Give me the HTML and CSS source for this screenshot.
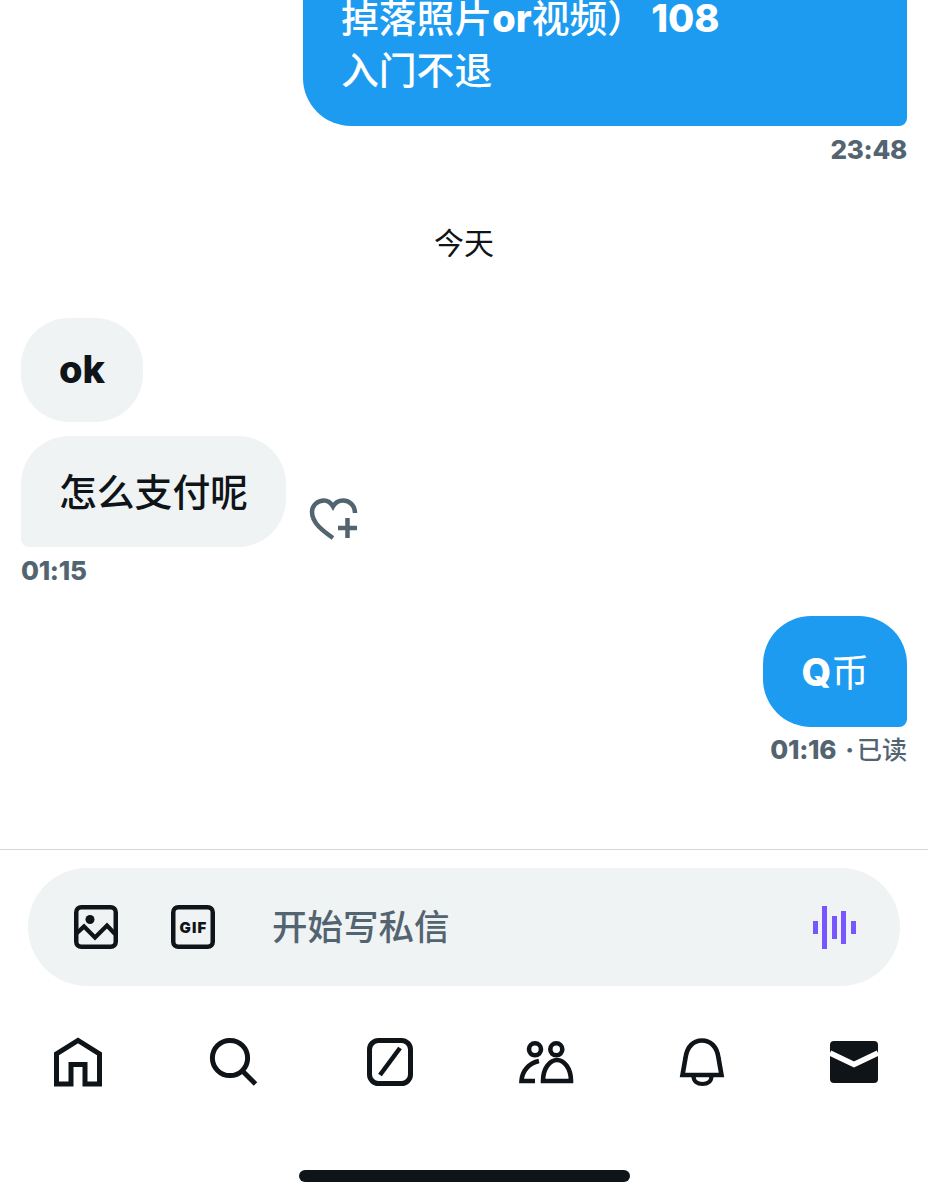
FILE: index.html
```html
<!DOCTYPE html>
<html lang="zh">
<head>
<meta charset="utf-8">
<title>私信</title>
<link rel="stylesheet" href="styles.css">
</head>
<body>
<div class="screen">
  <main class="thread">
    <div class="bubble sent first"><div><span class="cjk">掉落照片</span><b>or</b><span class="cjk">视频）</span> <b class="num">108</b></div><div class="cjk">入门不退</div></div>
    <div class="meta right first-meta">23:48</div>
    <div class="day">今天</div>
    <div class="bubble received solo"><b>ok</b></div>
    <div class="row">
      <div class="bubble received tail-left">怎么支付呢</div>
      <svg class="heart" viewBox="0 0 49 44" width="49" height="44" aria-hidden="true">
        <path d="M24 41 C14 34 3 26 3 15 C3 8 9 3.5 15 3.5 C19 3.5 22 6 24 9.5 C26 6 29 3.5 34 3.5 C41 3.5 46 9 46 16" fill="none" stroke="#536471" stroke-width="4.5"/>
        <path d="M29 31 H48 M38.5 21 V41" fill="none" stroke="#536471" stroke-width="4.5"/>
      </svg>
    </div>
    <div class="meta second-meta">01:15</div>
    <div class="bubble sent tail-right q"><b>Q</b><span class="thin">币</span></div>
    <div class="meta right read-row"><span>01:16</span><span class="read"><span class="dot">·</span>已读</span></div>
  </main>

  <section class="composer">
    <svg class="tool" viewBox="0 0 44 44" width="44" height="44" aria-hidden="true">
      <rect x="2.25" y="2.25" width="39.5" height="39.5" rx="5" fill="none" stroke="#0f1419" stroke-width="4.5"/>
      <circle cx="16" cy="14.5" r="4.5" fill="#0f1419"/>
      <path d="M3 28 L10 21.5 L21 32.5 L33 20.5 L41 29" fill="none" stroke="#0f1419" stroke-width="4.2"/>
    </svg>
    <svg class="tool gif" viewBox="0 0 44 44" width="44" height="44" aria-hidden="true">
      <rect x="2.25" y="2.25" width="39.5" height="39.5" rx="5" fill="none" stroke="#0f1419" stroke-width="4.5"/>
      <text x="22.5" y="27.5" class="gif-text" text-anchor="middle">GIF</text>
    </svg>
    <span class="placeholder">开始写私信</span>
    <svg class="wave" viewBox="0 0 44 44" width="44" height="44" aria-hidden="true">
      <rect x="1" y="16" width="5" height="13" fill="#7856ff"/>
      <rect x="10" y="1" width="5" height="43" fill="#7856ff"/>
      <rect x="20" y="11" width="5" height="23" fill="#7856ff"/>
      <rect x="29" y="6" width="5" height="33" fill="#7856ff"/>
      <rect x="39" y="16" width="5" height="13" fill="#7856ff"/>
    </svg>
  </section>

  <nav class="tabs">
    <svg viewBox="0 0 48 48" width="48" height="48" aria-hidden="true">
      <path d="M2.5 46 V16 L24 2.5 L45.5 16 V46 H31 V26.5 H17 V46 Z" fill="none" stroke="#0f1419" stroke-width="5"/>
    </svg>
    <svg viewBox="0 0 48 48" width="48" height="48" aria-hidden="true">
      <circle cx="21" cy="20" r="17.6" fill="none" stroke="#0f1419" stroke-width="5"/>
      <path d="M33.5 33 L46.5 46" fill="none" stroke="#0f1419" stroke-width="5"/>
    </svg>
    <svg viewBox="0 0 48 48" width="48" height="48" aria-hidden="true">
      <rect x="5.5" y="2.5" width="41" height="43" rx="9" fill="none" stroke="#0f1419" stroke-width="5"/>
      <path d="M36 10 L16 37" fill="none" stroke="#0f1419" stroke-width="4.6"/>
    </svg>
    <svg viewBox="0 0 48 48" width="48" height="48" aria-hidden="true">
      <circle cx="15" cy="11.3" r="6" fill="none" stroke="#0f1419" stroke-width="4.6"/>
      <circle cx="36.3" cy="11.3" r="6" fill="none" stroke="#0f1419" stroke-width="4.6"/>
      <path d="M23 43 C23 30 30 22 37 22 C44 22 51 30 51 43 Z" fill="none" stroke="#0f1419" stroke-width="4.6"/>
      <path d="M15 43 H1.5 C2 33 9 25 19 23" fill="none" stroke="#0f1419" stroke-width="4.6"/>
    </svg>
    <svg viewBox="0 0 48 48" width="48" height="48" aria-hidden="true">
      <path d="M7.5 37 L10.5 20 C12 8 19 2.5 27 2.5 C35 2.5 42 8 43.5 20 L46.5 37 Z" fill="none" stroke="#0f1419" stroke-width="4.6"/>
      <path d="M18.5 38 C18.5 43 22 46 27.5 46 C33 46 36.5 43 36.5 38" fill="none" stroke="#0f1419" stroke-width="4.2"/>
    </svg>
    <svg viewBox="0 0 48 48" width="48" height="48" aria-hidden="true">
      <rect x="0" y="3" width="48" height="42" rx="4" fill="#0f1419"/>
      <path d="M0 15 L24 26.5 L48 15" fill="none" stroke="#fff" stroke-width="5.6"/>
    </svg>
  </nav>

  <div class="home-indicator"></div>
</div>
</body>
</html>
```
FILE: styles.css
```css
* { box-sizing: border-box; }
html, body { margin: 0; padding: 0; background: #fff; }
body {
  font-family: "Inter", "Noto Sans CJK SC", "Noto Sans", sans-serif;
  color: #0f1419;
}
.screen {
  width: 928px;
  height: 1200px;
  overflow: hidden;
  display: flex;
  flex-direction: column;
}
.thread {
  height: 850px;
  flex: none;
  padding: 0 21px;
  border-bottom: 1px solid #cfd9de;
  display: flex;
  flex-direction: column;
  align-items: flex-start;
}
.bubble {
  font-size: 37.8px;
  line-height: 52px;
  font-weight: 500;
  padding: 30px 38px 29px;
  border-radius: 48px;
}
.bubble b { font-weight: 800; font-size: 38px; }
.sent {
  background: #1d9bf0;
  color: #fff;
  align-self: flex-end;
}
.received { background: #eff3f4; }
.first {
  width: 604px;
  margin-top: -8px;
  padding-top: 0;
  padding-bottom: 30px;
  border-radius: 0 0 8px 48px;
}
.first .num { margin-left: -4px; }
.solo {
  padding-top: 25px;
  padding-bottom: 27px;
  margin-bottom: 14px;
}
.tail-left { border-bottom-left-radius: 8px; }
.tail-right { border-bottom-right-radius: 8px; }
.q { margin-top: 28px; }
.thin { font-weight: 400; }
.row {
  display: flex;
  align-items: flex-end;
  gap: 23px;
}
.heart { margin-bottom: 6px; display: block; }
.meta {
  font-size: 26px;
  line-height: 34px;
  font-weight: 800;
  letter-spacing: -0.3px;
  color: #536471;
  margin-top: 6px;
}
.right { align-self: flex-end; }
.first-meta { margin-top: 7px; }
.second-meta { margin-top: 7px; }
.read { font-size: 25px; font-weight: 500; margin-left: 9px; letter-spacing: 0; }
.dot { margin-right: 3px; font-weight: 800; }
.day {
  align-self: center;
  font-size: 30px;
  line-height: 40px;
  font-weight: 400;
  margin-top: 56px;
  margin-bottom: 55px;
}
.composer {
  margin: 18px 28px 0;
  height: 118px;
  flex: none;
  background: #eff3f4;
  border-radius: 59px;
  display: flex;
  align-items: center;
  padding: 0 44px 0 46px;
}
.tool { display: block; flex: none; }
.gif { margin-left: 53px; }
.gif-text {
  font-family: "Inter", sans-serif;
  font-size: 15px;
  font-weight: 900;
  letter-spacing: 1.2px;
  fill: #0f1419;
}
.placeholder {
  margin-left: 57px;
  padding-bottom: 6px;
  font-size: 35.5px;
  font-weight: 500;
  color: #536471;
}
.wave { margin-left: auto; display: block; flex: none; }
.tabs {
  margin-top: 52px;
  padding: 0 50px 0 54px;
  display: flex;
  justify-content: space-between;
  flex: none;
}
.tabs svg { display: block; overflow: visible; flex: none; }
.home-indicator {
  width: 331px;
  height: 12px;
  margin: 84px 0 0 299px;
  background: #0f1419;
  border-radius: 6px;
  flex: none;
}
```
